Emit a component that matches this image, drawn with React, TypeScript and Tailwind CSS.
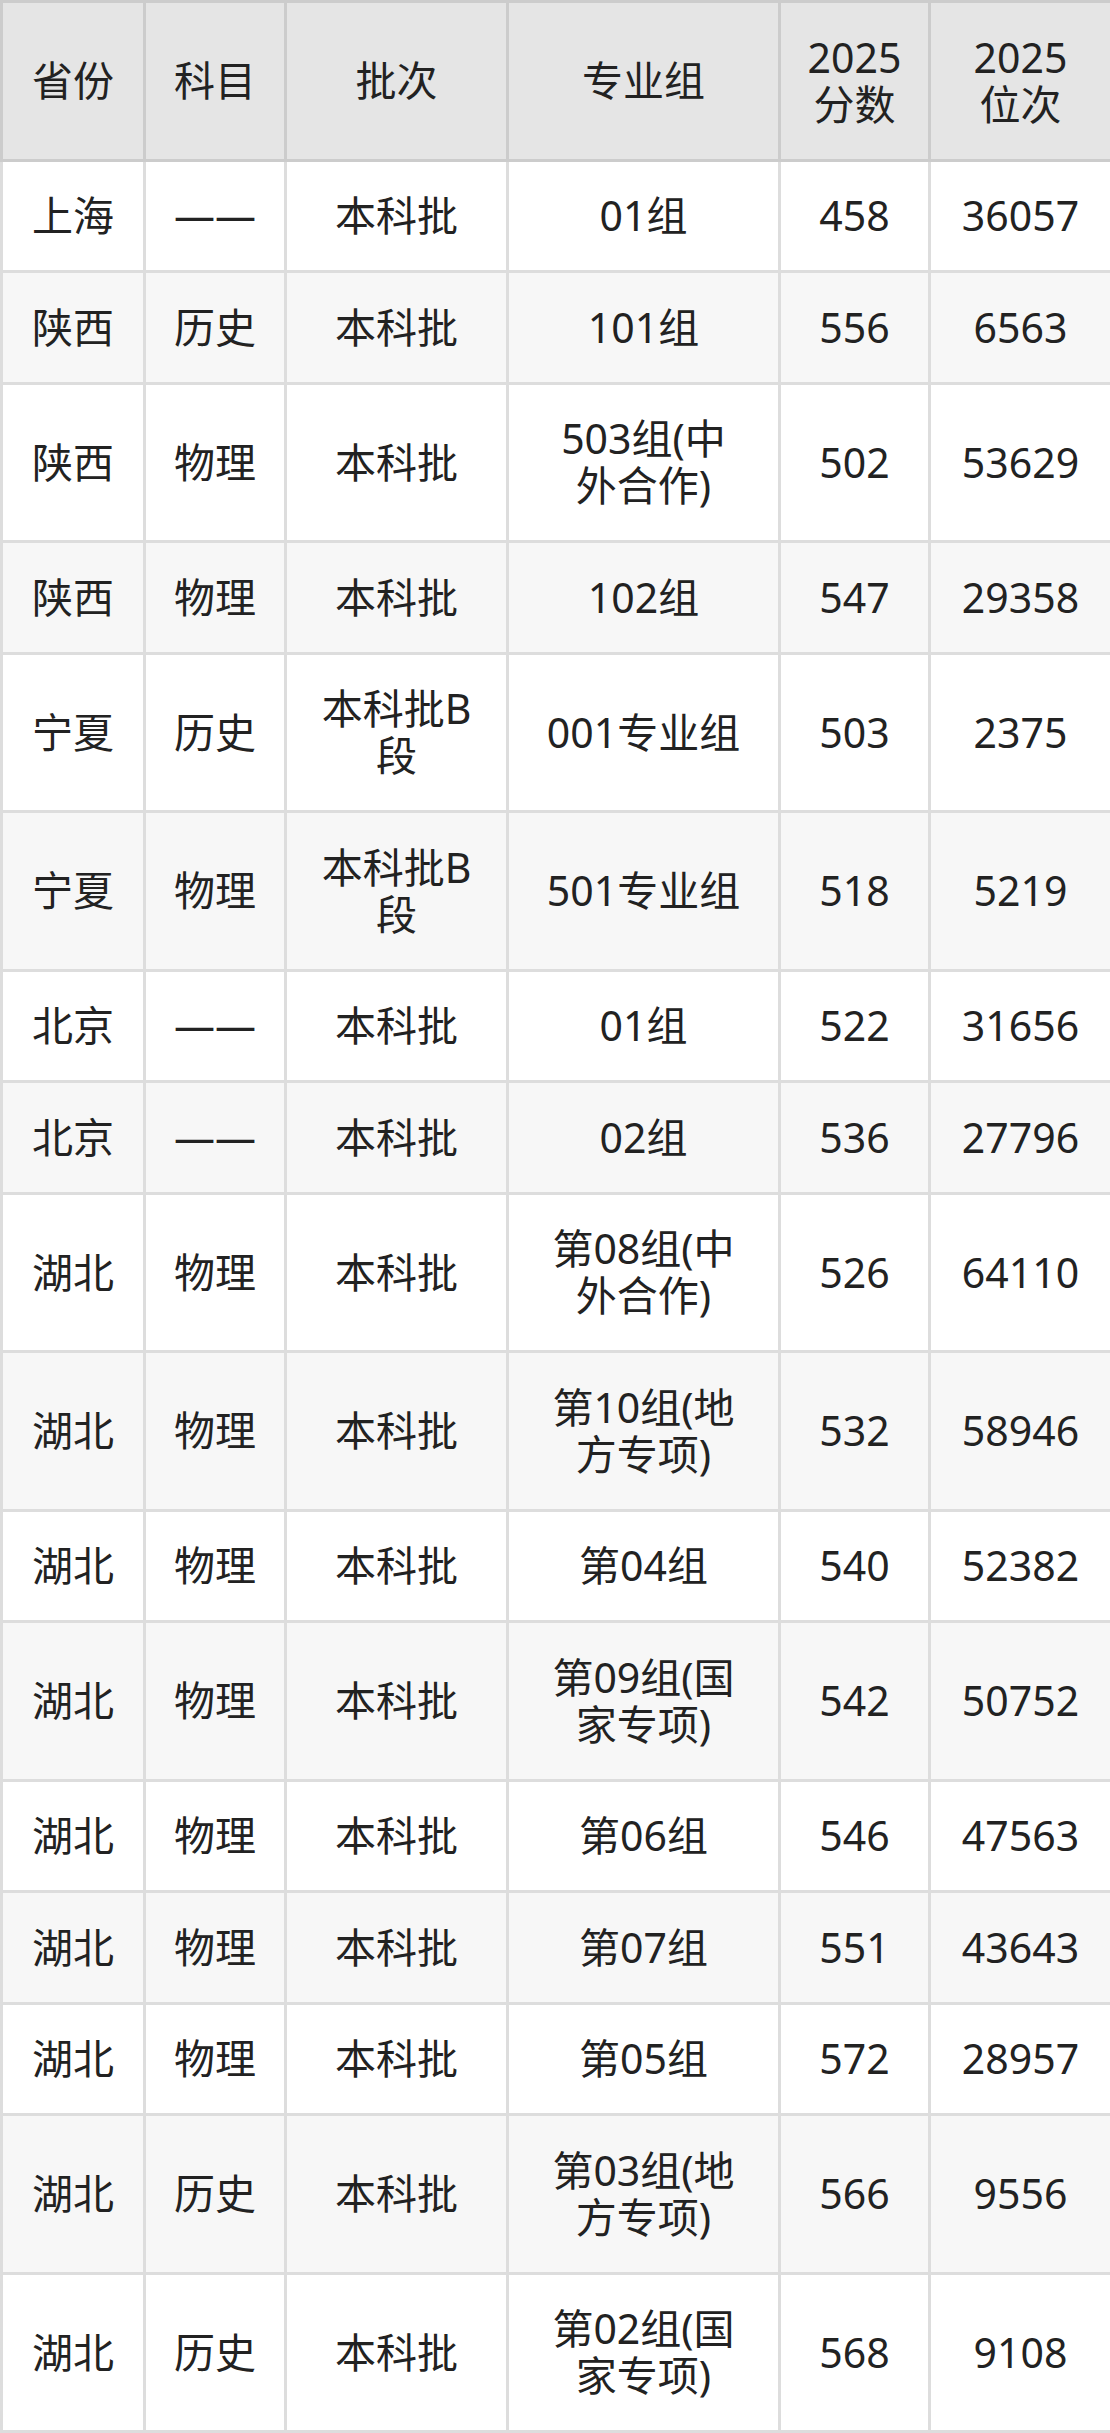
const headers = ["省份", "科目", "批次", "专业组", "2025分数", "2025位次"];

// column widths and horizontal padding, tuned so the cells wrap as in the source
const cols = [
  "w-[143px] px-[20px]",
  "w-[141px] px-[20px]",
  "w-[222px] px-[28px]",
  "w-[272px] px-[35px]",
  "w-[150px] px-[20px]",
  "w-[182px] px-[26px]",
];

const rows = [
  ["上海", "——", "本科批", "01组", "458", "36057"],
  ["陕西", "历史", "本科批", "101组", "556", "6563"],
  ["陕西", "物理", "本科批", "503组(中外合作)", "502", "53629"],
  ["陕西", "物理", "本科批", "102组", "547", "29358"],
  ["宁夏", "历史", "本科批B段", "001专业组", "503", "2375"],
  ["宁夏", "物理", "本科批B段", "501专业组", "518", "5219"],
  ["北京", "——", "本科批", "01组", "522", "31656"],
  ["北京", "——", "本科批", "02组", "536", "27796"],
  ["湖北", "物理", "本科批", "第08组(中外合作)", "526", "64110"],
  ["湖北", "物理", "本科批", "第10组(地方专项)", "532", "58946"],
  ["湖北", "物理", "本科批", "第04组", "540", "52382"],
  ["湖北", "物理", "本科批", "第09组(国家专项)", "542", "50752"],
  ["湖北", "物理", "本科批", "第06组", "546", "47563"],
  ["湖北", "物理", "本科批", "第07组", "551", "43643"],
  ["湖北", "物理", "本科批", "第05组", "572", "28957"],
  ["湖北", "历史", "本科批", "第03组(地方专项)", "566", "9556"],
  ["湖北", "历史", "本科批", "第02组(国家专项)", "568", "9108"],
];

export default function App() {
  return (
    <div className="w-[1110px] bg-white font-['Noto_Sans','Noto_Sans_CJK_SC',sans-serif] text-[41px] leading-[47px] text-[#222222]">
      <table className="w-[1110px] table-fixed border-collapse text-center">
        <thead>
          <tr className="bg-[#e5e5e5]">
            {headers.map((h, i) => (
              <th key={h} className={`${cols[i]} border-[3px] border-[#cccccc] py-[30.75px] font-normal`}>
                {h}
              </th>
            ))}
          </tr>
        </thead>
        <tbody>
          {rows.map((row, r) => (
            <tr key={r} className={r % 2 === 1 ? "bg-[#f7f7f7]" : "bg-white"}>
              {row.map((cell, c) => (
                <td key={c} className={`${cols[c]} border-[3px] border-[#dddddd] py-[30.75px]`}>
                  {cell}
                </td>
              ))}
            </tr>
          ))}
        </tbody>
      </table>
    </div>
  );
}
